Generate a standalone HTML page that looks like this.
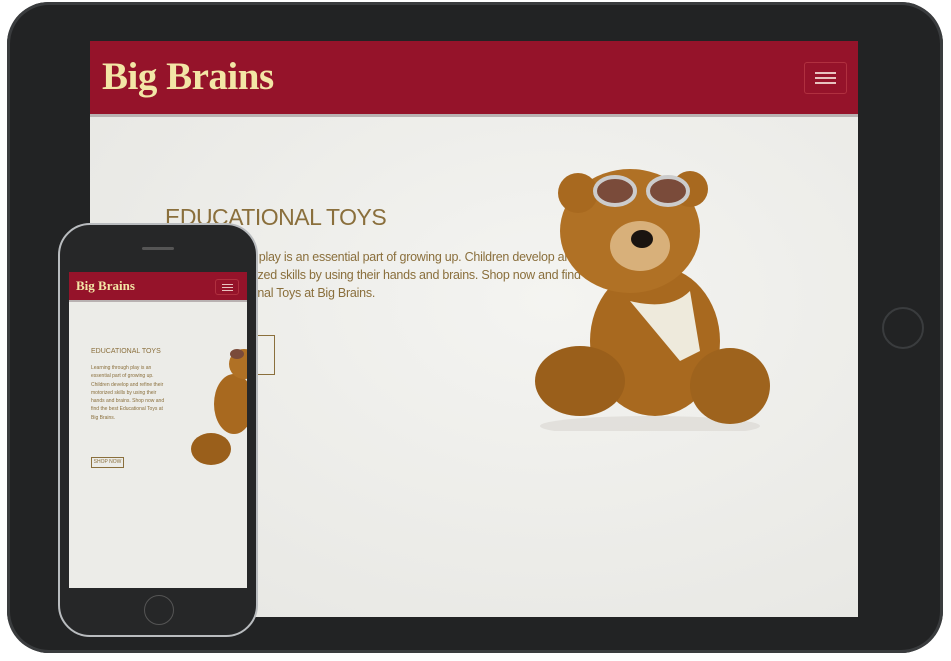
<!DOCTYPE html>
<html><head><style>
body{margin:0;width:951px;height:661px;background:#fff;position:relative;overflow:hidden;font-family:"Liberation Sans",sans-serif}
.tab{position:absolute;left:7px;top:2px;width:936px;height:651px;background:#222324;border-radius:42px;box-shadow:inset 0 0 0 3px #3a3c3e}
.scr{position:absolute;left:90px;top:41px;width:768px;height:576px;background:radial-gradient(ellipse at 60% 45%,#f4f4f1,#e6e6e2);overflow:hidden}
.hdr{position:absolute;left:0;top:0;width:100%;height:73px;background:#95132a;border-bottom:3px solid #b9b2b2}
.logo{position:absolute;left:12px;top:13px;font-family:"Liberation Serif",serif;font-weight:bold;font-size:39px;color:#f3e6a6;letter-spacing:-.5px}
.burg{position:absolute;border:1px solid #b0303f;border-radius:3px}
.burg i{position:absolute;left:25%;width:50%;height:1.5px;background:#e8c3c0}
.h1{position:absolute;left:75px;top:163px;font-size:23px;color:#8a6f3c;letter-spacing:-.5px}
.p{position:absolute;left:75px;top:207px;width:430px;font-size:12.5px;line-height:18px;color:#8a6f3c;letter-spacing:-.25px}
.btn{position:absolute;border:1.5px solid #8a6f3c;color:#8a6f3c}
.home{position:absolute;left:882px;top:307px;width:38px;height:38px;border-radius:50%;border:2px solid #3a3c3e}
.ph{position:absolute;left:58px;top:223px;width:196px;height:410px;background:#262728;border-radius:32px;border:2px solid #b9bcbf}
.pscr{position:absolute;left:69px;top:272px;width:178px;height:316px;background:#ecece8;overflow:hidden}
</style></head><body>
<div class="tab"></div>
<div class="home"></div>
<div class="scr">
 <div class="hdr"><div class="logo">Big Brains</div>
 <div class="burg" style="left:714px;top:21px;width:41px;height:30px"><i style="top:9px"></i><i style="top:14px"></i><i style="top:19px"></i></div></div>
 <div class="h1">EDUCATIONAL TOYS</div>
 <div class="p">Learning through play is an essential part of growing up. Children develop and refine their motorized skills by using their hands and brains. Shop now and find the best Educational Toys at Big Brains.</div>
 <div class="btn" style="left:75px;top:294px;width:108px;height:38px;font-size:20px;line-height:38px;text-align:center">SHOP NOW</div>
 <svg style="position:absolute;left:430px;top:120px" width="260" height="270" viewBox="0 0 260 270">
  <ellipse cx="130" cy="265" rx="110" ry="10" fill="#d8d6d0" opacity=".6"/>
  <ellipse cx="135" cy="180" rx="65" ry="75" fill="#a8691f"/>
  <ellipse cx="60" cy="220" rx="45" ry="35" fill="#9a5f1b"/>
  <ellipse cx="210" cy="225" rx="40" ry="38" fill="#9e631d"/>
  <ellipse cx="110" cy="70" rx="70" ry="62" fill="#b07125"/>
  <circle cx="58" cy="32" r="20" fill="#a8691f"/><circle cx="170" cy="28" r="18" fill="#a8691f"/>
  <ellipse cx="120" cy="85" rx="30" ry="25" fill="#d8b07a"/>
  <ellipse cx="122" cy="78" rx="11" ry="9" fill="#1a1410"/>
  <ellipse cx="95" cy="30" rx="20" ry="14" fill="#7a4b3a" stroke="#ccc" stroke-width="4"/>
  <ellipse cx="148" cy="30" rx="20" ry="14" fill="#7a4b3a" stroke="#ccc" stroke-width="4"/>
  <path d="M110 140 Q150 150 170 130 L180 190 L160 200 Z" fill="#eeeadc"/>
 </svg>
</div>
<div class="ph"></div>
<div style="position:absolute;left:142px;top:247px;width:32px;height:3px;background:#555;border-radius:2px"></div>
<div style="position:absolute;left:144px;top:595px;width:28px;height:28px;border-radius:50%;border:1.5px solid #555"></div>
<div class="pscr">
 <div style="position:absolute;left:0;top:0;width:178px;height:28px;background:#95132a;border-bottom:2px solid #b9b2b2">
  <div style="position:absolute;left:7px;top:6px;font-family:'Liberation Serif',serif;font-weight:bold;font-size:13px;color:#f3e6a6">Big Brains</div>
  <div class="burg" style="left:146px;top:7px;width:22px;height:14px"><i style="top:4px;height:1px"></i><i style="top:7px;height:1px"></i><i style="top:10px;height:1px"></i></div>
 </div>
 <div style="position:absolute;left:22px;top:76px;font-size:7px;color:#8a6f3c">EDUCATIONAL TOYS</div>
 <div style="position:absolute;left:22px;top:92px;width:78px;font-size:5px;line-height:8.3px;color:#8a6f3c">Learning through play is an essential part of growing up. Children develop and refine their motorized skills by using their hands and brains. Shop now and find the best Educational Toys at Big Brains.</div>
 <div class="btn" style="left:22px;top:185px;width:31px;height:9px;font-size:5px;line-height:9px;text-align:center;border-width:1px">SHOP NOW</div>
 <svg style="position:absolute;left:120px;top:72px" width="60" height="130" viewBox="0 0 60 130">
  <ellipse cx="45" cy="60" rx="20" ry="30" fill="#a8691f"/>
  <ellipse cx="22" cy="105" rx="20" ry="16" fill="#9a5f1b"/>
  <circle cx="55" cy="20" r="15" fill="#b07125"/>
  <ellipse cx="48" cy="10" rx="7" ry="5" fill="#7a4b3a"/>
 </svg>
</div>
</body></html>
